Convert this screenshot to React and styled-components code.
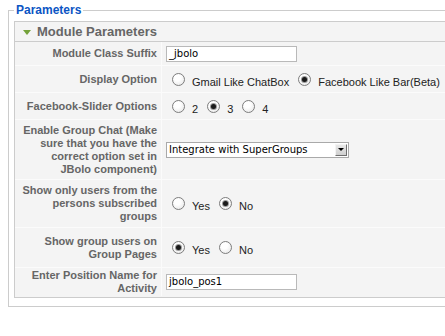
import React from "react";
import styled, { createGlobalStyle } from "styled-components";

// Joomla-ish admin colours
const borderGray = "#cccccc";
const panelBg = "#f4f4f4";
const rowLine = "#fbfbfb";
const labelGray = "#666666";
const legendBlue = "#0b55c4";

const GlobalStyle = createGlobalStyle`
  html, body {
    margin: 0;
    padding: 0;
    background: #ffffff;
    overflow: hidden;
  }
  body {
    font-family: "Liberation Sans", Arial, sans-serif;
  }
`;

const Fieldset = styled.fieldset`
  margin: 3px 0 0 8px;
  padding: 4px 5px 8px 5px;
  border: 1px solid ${borderGray};
  width: 470px;
  min-width: 0;
  box-sizing: border-box;
`;

const Legend = styled.legend`
  padding: 0 2px;
  color: ${legendBlue};
  font: bold 12px/14px "Liberation Sans", Arial, sans-serif;
`;

const Panel = styled.div`
  border: 1px solid ${borderGray};
  background: ${panelBg};
`;

const PanelHeader = styled.div`
  display: flex;
  align-items: center;
  gap: 6px;
  height: 19px;
  padding-left: 8px;
  border-bottom: 1px solid ${borderGray};
  color: ${labelGray};
  font: bold 13px/19px "Liberation Sans", Arial, sans-serif;
`;

const Arrow = styled.span`
  width: 0;
  height: 0;
  border-left: 4px solid transparent;
  border-right: 4px solid transparent;
  border-top: 5px solid #74a23a;
  margin-top: 2px;
`;

const Row = styled.div`
  display: grid;
  grid-template-columns: 147px 1fr;
  border-bottom: 1px solid ${(p) => (p.$last ? "transparent" : rowLine)};
`;

const Key = styled.div`
  padding: ${(p) => p.$pad || "4px"} 4px ${(p) => p.$pad || "4px"} 0;
  border-right: 1px solid ${rowLine};
  text-align: right;
  color: ${labelGray};
  font-weight: bold;
  font-size: 11px;
  line-height: 13px;
  display: flex;
  align-items: center;
  justify-content: flex-end;
`;

const Value = styled.div`
  display: flex;
  align-items: center;
  padding: 0 4px;
  color: #222;
  font-size: 11px;
`;

const TextInput = styled.div`
  box-sizing: border-box;
  width: 131px;
  height: 16px;
  border: 1px solid #b9b9b9;
  background: #fff;
  padding: 0 2px;
  font: 10px/14px "DejaVu Sans", sans-serif;
  color: #000;
`;

const Select = styled.div`
  box-sizing: border-box;
  width: 183px;
  height: 16px;
  border: 1px solid #a9a9a9;
  background: #fff;
  display: flex;
  align-items: center;
  justify-content: space-between;
  padding: 0 1px 0 2px;
  font: 10px/14px "DejaVu Sans", sans-serif;
  color: #000;
`;

const SelectButton = styled.span`
  box-sizing: border-box;
  width: 12px;
  height: 12px;
  border: 1px solid;
  border-color: #f4f4f4 #6f6f6f #6f6f6f #f4f4f4;
  background: linear-gradient(#e8e8e8, #cfcfcf);
  display: flex;
  align-items: center;
  justify-content: center;

  &::after {
    content: "";
    width: 0;
    height: 0;
    border-left: 3px solid transparent;
    border-right: 3px solid transparent;
    border-top: 3px solid #000;
  }
`;

const RadioGroup = styled.div`
  display: flex;
  align-items: center;
  padding-left: 6px;
`;

const Radio = styled.span`
  box-sizing: border-box;
  width: 13px;
  height: 13px;
  border-radius: 50%;
  border: 1px solid #7d7d7d;
  background: radial-gradient(circle at 40% 35%, #ffffff 30%, #e3e3e3 100%);
  display: flex;
  align-items: center;
  justify-content: center;
  flex-shrink: 0;

  &::after {
    content: "";
    width: 5px;
    height: 5px;
    border-radius: 50%;
    background: ${(p) => (p.$checked ? "#1a1a1a" : "transparent")};
    box-shadow: ${(p) => (p.$checked ? "0 0 0 1px #9a9a9a" : "none")};
  }
`;

const RadioText = styled.span`
  margin: 5px 9px 0 7px;
  white-space: nowrap;
`;

const RadioSet = ({ options, checked }) => (
  <RadioGroup>
    {options.map((o) => (
      <React.Fragment key={o}>
        <Radio $checked={o === checked} />
        <RadioText>{o}</RadioText>
      </React.Fragment>
    ))}
  </RadioGroup>
);

export default function App() {
  return (
    <>
      <GlobalStyle />
      <Fieldset>
        <Legend>Parameters</Legend>
        <Panel>
          <PanelHeader>
            <Arrow />
            Module Parameters
          </PanelHeader>

          <Row>
            <Key $pad="5px">Module Class Suffix</Key>
            <Value>
              <TextInput>_jbolo</TextInput>
            </Value>
          </Row>

          <Row>
            <Key $pad="6.5px">Display Option</Key>
            <Value>
              <RadioSet
                options={["Gmail Like ChatBox", "Facebook Like Bar(Beta)"]}
                checked="Facebook Like Bar(Beta)"
              />
            </Value>
          </Row>

          <Row>
            <Key $pad="6.5px">Facebook-Slider Options</Key>
            <Value>
              <RadioSet options={["2", "3", "4"]} checked="3" />
            </Value>
          </Row>

          <Row>
            <Key $pad="3.5px">
              Enable Group Chat (Make sure that you have the correct option set
              in
              <br />
              JBolo component)
            </Key>
            <Value>
              <Select>
                Integrate with SuperGroups
                <SelectButton />
              </Select>
            </Value>
          </Row>

          <Row>
            <Key $pad="4px">
              Show only users from the persons subscribed groups
            </Key>
            <Value>
              <RadioSet options={["Yes", "No"]} checked="No" />
            </Value>
          </Row>

          <Row>
            <Key $pad="6.5px">Show group users on Group Pages</Key>
            <Value>
              <RadioSet options={["Yes", "No"]} checked="Yes" />
            </Value>
          </Row>

          <Row $last>
            <Key $pad="1px">Enter Position Name for Activity</Key>
            <Value>
              <TextInput>jbolo_pos1</TextInput>
            </Value>
          </Row>
        </Panel>
      </Fieldset>
    </>
  );
}
